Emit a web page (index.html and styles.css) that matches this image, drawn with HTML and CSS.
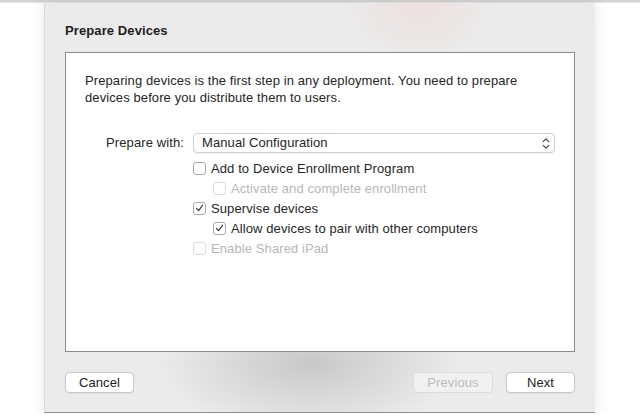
FILE: index.html
```html
<!DOCTYPE html>
<html lang="en">
<head>
  <meta charset="UTF-8">
  <title>Prepare Devices</title>
  <meta name="viewport" content="width=device-width, initial-scale=1.0">
  <link rel="stylesheet" href="styles.css">
</head>
<body>

  <!-- WINDOW EDGE -->
  <div class="window-top"></div>

  <!-- SHEET -->
  <div class="sheet">
    <h1 class="sheet-title">Prepare Devices</h1>

    <div class="panel">
      <p class="intro">Preparing devices is the first step in any deployment. You need to prepare devices before you distribute them to users.</p>

      <div class="form">
        <label class="field-label">Prepare with:</label>
        <div class="popup">
          <span>Manual Configuration</span>
          <svg class="popup-arrows" width="8" height="13" viewBox="0 0 8 13">
            <path d="M1.2 4.6 L4 1.8 L6.8 4.6" fill="none" stroke="#444" stroke-width="1.2" stroke-linecap="round" stroke-linejoin="round"/>
            <path d="M1.2 8.4 L4 11.2 L6.8 8.4" fill="none" stroke="#444" stroke-width="1.2" stroke-linecap="round" stroke-linejoin="round"/>
          </svg>
        </div>

        <div class="options">
          <div class="check">
            <span class="box"></span>
            <span>Add to Device Enrollment Program</span>
          </div>
          <div class="check sub disabled">
            <span class="box"></span>
            <span>Activate and complete enrollment</span>
          </div>
          <div class="check">
            <span class="box">
              <svg width="12" height="12" viewBox="0 0 12 12"><path d="M2.6 6.4 L5 8.9 L9.4 3" fill="none" stroke="#333" stroke-width="1.3" stroke-linecap="round" stroke-linejoin="round"/></svg>
            </span>
            <span>Supervise devices</span>
          </div>
          <div class="check sub">
            <span class="box">
              <svg width="12" height="12" viewBox="0 0 12 12"><path d="M2.6 6.4 L5 8.9 L9.4 3" fill="none" stroke="#333" stroke-width="1.3" stroke-linecap="round" stroke-linejoin="round"/></svg>
            </span>
            <span>Allow devices to pair with other computers</span>
          </div>
          <div class="check disabled">
            <span class="box"></span>
            <span>Enable Shared iPad</span>
          </div>
        </div>
      </div>
    </div>

    <div class="actions">
      <button class="btn">Cancel</button>
      <span class="spacer"></span>
      <button class="btn btn-wide" disabled>Previous</button>
      <button class="btn">Next</button>
    </div>
  </div>

</body>
</html>
```

FILE: styles.css
```css
body {
  font-family: "Liberation Sans", Arial, sans-serif;
  font-size: 13px;
  letter-spacing: 0.1px;
  color: #262626;
  background: #ffffff;
  margin: 0;
  padding: 0;
  overflow: hidden;
}

/* --- WINDOW EDGE --- */
.window-top {
  height: 2px;
  background: #d4d4d4;
  border-bottom: 1px solid #e6e6e6;
}

/* --- SHEET --- */
.sheet {
  width: 551px;
  height: 410px;
  margin-left: 44px;
  box-sizing: border-box;
  padding: 20px 20px 0 20px;
  background:
    radial-gradient(ellipse 80px 60px at 68% 0%, rgba(240, 210, 210, 0.45), rgba(240, 210, 210, 0)),
    radial-gradient(ellipse 150px 70px at 48% 88%, rgba(185, 185, 185, 0.7), rgba(185, 185, 185, 0)),
    #ebebeb;
  border-left: 1px solid #dadada;
  border-bottom: 1px solid #8e8e8e;
  box-shadow: 0 0 14px rgba(0, 0, 0, 0.1);
  display: flex;
  flex-direction: column;
}

.sheet-title {
  margin: 0 0 13px;
  font-size: 13px;
  line-height: 16px;
  font-weight: bold;
  color: #1e1e1e;
}

.panel {
  height: 300px;
  box-sizing: border-box;
  background: #ffffff;
  border: 1px solid #8c8c8c;
  padding: 19px 19px 0 19px;
}

.intro {
  margin: 0 0 27px;
  line-height: 17px;
}

/* --- FORM --- */
.form {
  display: grid;
  grid-template-columns: 108px 1fr;
  align-items: start;
}

.field-label {
  text-align: right;
  padding-right: 9px;
  line-height: 20px;
}

.popup {
  height: 20px;
  box-sizing: border-box;
  border: 1px solid #cfcfcf;
  border-radius: 4px;
  box-shadow: 0 1px 1px rgba(0, 0, 0, 0.06);
  display: flex;
  justify-content: space-between;
  align-items: center;
  padding: 0 4px 0 8px;
  line-height: 18px;
}

.popup-arrows {
  display: block;
}

.options {
  grid-column: 2;
  padding-top: 5px;
}

.check {
  height: 20px;
  display: flex;
  align-items: center;
  gap: 5px;
}

.check.sub {
  padding-left: 20px;
}

.box {
  width: 13px;
  height: 13px;
  box-sizing: border-box;
  border: 1px solid #a9a9a9;
  border-radius: 3px;
  background: #fff;
  display: flex;
  align-items: center;
  justify-content: center;
}

.box svg {
  display: block;
}

.check.disabled {
  color: #b7b7b7;
}

.check.disabled .box {
  border-color: #dadada;
}

/* --- BUTTONS --- */
.actions {
  display: flex;
  gap: 13px;
  margin-top: 20px;
}

.spacer {
  flex: 1;
}

.btn {
  width: 69px;
  height: 21px;
  font-family: inherit;
  font-size: 13px;
  letter-spacing: inherit;
  color: #222;
  background: #ffffff;
  border: 1px solid #c8c8c8;
  border-radius: 4px;
  box-shadow: 0 1px 1px rgba(0, 0, 0, 0.05);
  padding: 0;
}

.btn-wide {
  width: 80px;
}

.btn:disabled {
  background: #f1f1f1;
  border-color: #dcdcdc;
  color: #bcbcbc;
  box-shadow: none;
}
```
